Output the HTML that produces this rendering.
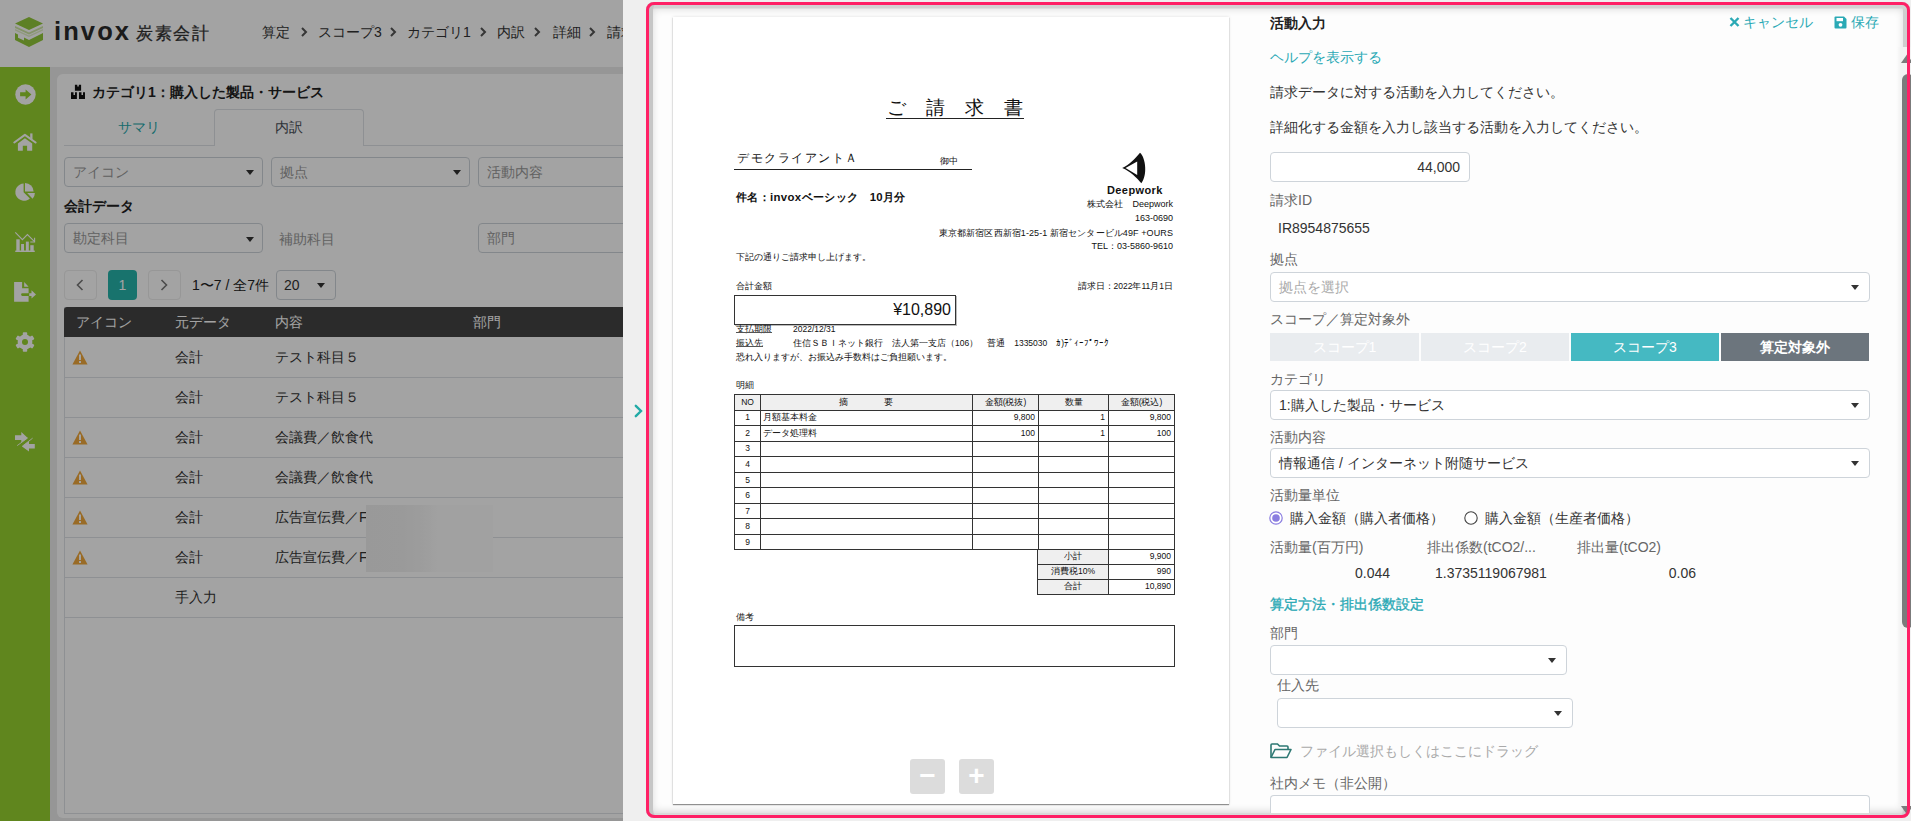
<!DOCTYPE html>
<html><head><meta charset="utf-8">
<style>
*{box-sizing:border-box;margin:0;padding:0}
html,body{width:1911px;height:821px;overflow:hidden;background:#efefef;font-family:"Liberation Sans",sans-serif;color:#333}
.a{position:absolute;white-space:nowrap}
#left{position:absolute;left:0;top:0;width:623px;height:821px;overflow:hidden;background:#ebebeb}
#hdr{position:absolute;left:0;top:0;width:623px;height:67px;background:#fff}
#side{position:absolute;left:0;top:67px;width:50px;height:754px;background:#97d22f}
#card{position:absolute;left:57px;top:74px;width:620px;height:744px;background:#fff;border-radius:6px}
.sel{position:absolute;height:30px;border:1px solid #ced4da;border-radius:4px;background:#fff;font-size:14px;color:#999;padding-left:8px;line-height:29px}
.caret{position:absolute;width:0;height:0;border-left:4.5px solid transparent;border-right:4.5px solid transparent;border-top:5px solid #333}
.row{position:absolute;left:64px;width:600px;height:40px;border-bottom:1px solid #dee2e6;font-size:14px;color:#333}
.row span{line-height:38px!important}
.row span{position:absolute;top:0;line-height:40px}
#ovl{position:absolute;left:0;top:0;width:623px;height:821px;background:rgba(0,0,0,0.36)}
#right{position:absolute;left:623px;top:0;width:1288px;height:821px;background:#efefef}
.bc{top:22px;font-size:14px;line-height:20px;color:#333}
.th{top:312px;font-size:14px;line-height:20px;color:#fff}
#panel{position:absolute;left:646px;top:2px;width:1264px;height:816px;border-radius:8px;background:#fdfdfd;box-shadow:inset 7px 0 0 0 #c6c6c6,inset 0 6.5px 0 0 #d3d3d3,inset -7px 0 0 0 #cfcfcf,inset 0 -5px 0 0 #dadada,inset 0 0 9px 6px rgba(0,0,0,.17)}
#page{position:absolute;left:673px;top:17px;width:556px;height:787px;background:#fff;box-shadow:0 1px 1px rgba(0,0,0,.4),0 0 3px rgba(0,0,0,.13)}
#pink{position:absolute;left:646px;top:2px;width:1264px;height:816px;border:3.4px solid #ff2066;border-radius:8px}
.d13{font-size:12px;line-height:18px;color:#111}
.d8{font-size:8.5px;line-height:11px;color:#111}
.dr{right:738px;font-size:8.5px;line-height:11px;color:#111;text-align:right}
#it,#st{border-collapse:collapse;font-size:8.5px;color:#111}
#it td,#st td{border:1px solid #333;height:15.55px;padding:0 2px;text-align:center;line-height:11px}
#it tr.hd td{background:#efefef}
#it td.l{text-align:left}
#it td.r,#st td.r{text-align:right;padding-right:3px}
#st td.g{background:#efefef}
#st td{height:14.9px!important}
.zb{top:759px;width:35px;height:35px;background:#dcdcdc;border-radius:3px;color:#fff;font-size:28px;line-height:34px;text-align:center;font-weight:bold}
.tl{font-size:14px;line-height:20px;color:#2aa9b5}
.ft{font-size:14px;line-height:20px;color:#333}
.lb{font-size:14px;line-height:20px;color:#666}
.inp{border:1px solid #ced4da;border-radius:4px;background:#fff;font-size:14px;line-height:28px}
.sb{top:333px;height:28px;font-size:14px;line-height:28px;text-align:center}
</style></head><body>
<div id="left">
  <div id="hdr">
    <svg class="a" style="left:13px;top:16px" width="32" height="32" viewBox="0 0 32 32">
      <path d="M16 1 L30 7.5 L16 14 L2 7.5 Z" fill="#92c83a"/>
      <path d="M2 10 L16 16.5 L30 10 L30 12 L16 18.5 L2 12 Z" fill="#c3e08f" opacity="0.8"/>
      <path d="M2 13 L16 19.5 L30 13 L30 14.5 L16 21 L2 14.5 Z" fill="#d9ecb7" opacity="0.8"/>
      <path d="M2 17 L2 24 L16 31 L30 24 L30 17 L16 24 L11 21.5 L11 24.5 L5 21.7 L5 18.5 Z" fill="#92c83a"/>
    </svg>
    <div class="a" style="left:54px;top:15px;font-size:25.5px;line-height:32px;font-weight:bold;color:#2b2b2b;letter-spacing:2.1px">invox</div>
    <div class="a" style="left:136px;top:23px;font-size:17px;line-height:22px;color:#333;letter-spacing:1.6px;-webkit-text-stroke:0.3px #333">炭素会計</div>
    <div class="a bc" style="left:262px">算定</div>
    <div class="a bc" style="left:318px">スコープ3</div>
    <div class="a bc" style="left:407px">カテゴリ1</div>
    <div class="a bc" style="left:497px">内訳</div>
    <div class="a bc" style="left:553px">詳細</div>
    <div class="a bc" style="left:607px">請求</div>
    <svg class="a" style="left:300px;top:27px" width="8" height="10" viewBox="0 0 8 10"><path d="M2 1 L6 5 L2 9" stroke="#555" stroke-width="2" fill="none"/></svg>
    <svg class="a" style="left:389px;top:27px" width="8" height="10" viewBox="0 0 8 10"><path d="M2 1 L6 5 L2 9" stroke="#555" stroke-width="2" fill="none"/></svg>
    <svg class="a" style="left:479px;top:27px" width="8" height="10" viewBox="0 0 8 10"><path d="M2 1 L6 5 L2 9" stroke="#555" stroke-width="2" fill="none"/></svg>
    <svg class="a" style="left:533px;top:27px" width="8" height="10" viewBox="0 0 8 10"><path d="M2 1 L6 5 L2 9" stroke="#555" stroke-width="2" fill="none"/></svg>
    <svg class="a" style="left:588px;top:27px" width="8" height="10" viewBox="0 0 8 10"><path d="M2 1 L6 5 L2 9" stroke="#555" stroke-width="2" fill="none"/></svg>
  </div>
  <div id="side"></div>
  <svg class="a" style="left:0;top:0" width="50" height="460" viewBox="0 0 50 460">
    <g fill="#fff">
      <circle cx="25.5" cy="94.5" r="10.2"/>
      <path d="M14.3 142.5 L24.9 134.9 L35.6 142.5" stroke="#fff" stroke-width="2.1" fill="none" stroke-linecap="round" stroke-linejoin="round"/>
      <rect x="30.2" y="133.4" width="2.3" height="6"/>
      <path d="M17.9 143.4 L24.9 138.2 L32.2 143.4 V150.7 H27.1 V145.7 H22.8 V150.7 H17.9 Z"/>
      <path d="M23.6 183.6 A8.6 8.6 0 1 0 29.9 198.4 L23.6 192.3 Z"/>
      <path d="M25 182.9 A8.6 8.6 0 0 1 33.6 191.5 H25 Z"/>
      <path d="M27.2 193 H34.9 A8.6 8.6 0 0 1 32.6 198.7 Z"/>
      <rect x="15.1" y="250.6" width="19.8" height="1.3" rx="0.6"/>
      <rect x="16.3" y="239.3" width="3.4" height="11.6"/>
      <rect x="21.1" y="244" width="2.9" height="6.9"/>
      <rect x="25.9" y="241.6" width="2.9" height="9.3"/>
      <rect x="30.3" y="245.2" width="3.4" height="5.7"/>
      <path d="M15.3 232.4 L22.4 239.6 L27.4 234.5 L34.3 241.4" stroke="#fff" stroke-width="1.1" fill="none"/>
      <path d="M34.6 237.8 V242 H30.3" stroke="#fff" stroke-width="1.1" fill="none"/>
      <path d="M14.1 282.1 H22.1 V288.2 H28.6 V293.2 H22.3 Q21.1 293.2 21.1 294.5 Q21.1 295.9 22.3 295.9 H28.6 V301.7 H14.1 Z"/>
      <path d="M24.2 282.1 L28.6 286.7 H24.2 Z"/>
      <path d="M29.2 293.2 H31.5 V290.3 L36 294.5 L31.5 298.6 V295.9 H29.2 Z"/>
      <path d="M15 435.3 H21.3 V432.1 L27.8 437.9 L21.3 442.6 V439.9 H15 Z"/>
      <path d="M34.8 444 H29 V441 L22 446.4 L29 451.5 V448.5 H34.8 Z"/>
      <path d="M27.6 438 L17.2 445.6 M22.2 446.3 L32.6 438.2" stroke="#fff" stroke-width="0.9"/>
    </g>
        <path d="M20.1 92.3 H25.6 V89.4 L31.4 94.5 L25.6 99.6 V96.3 H20.1 Z" fill="#97d22f"/>
    <g transform="translate(25 342)">
      <g fill="#fff">
        <circle r="7.4"/>
        <rect x="-2.2" y="-9.7" width="4.4" height="19.4" rx="0.8"/>
        <rect x="-2.2" y="-9.7" width="4.4" height="19.4" rx="0.8" transform="rotate(60)"/>
        <rect x="-2.2" y="-9.7" width="4.4" height="19.4" rx="0.8" transform="rotate(-60)"/>
      </g>
      <circle r="3" fill="#97d22f"/>
    </g>
  </svg>
  <div id="card">
  </div>
  <!-- card contents (absolute wrt page) -->
  <svg class="a" style="left:70px;top:84px" width="16" height="16" viewBox="0 0 16 16"><path d="M4.9 0.8 H7.3 V2.5 H8.8 V0.8 H11.1 V6.8 H4.9 Z M1 8.3 H3.5 V11 H5 V8.3 H6.9 V14.9 H1 Z M9 8.3 H11.5 V11 H13 V8.3 H15 V14.9 H9 Z" fill="#111"/></svg>
  <div class="a" style="left:92px;top:82px;font-size:14px;line-height:20px;font-weight:bold;color:#222">カテゴリ1：購入した製品・サービス</div>
  <div class="a" style="left:64px;top:145px;width:580px;height:1px;background:#dee2e6"></div>
  <div class="a" style="left:214px;top:109px;width:150px;height:37px;border:1px solid #dee2e6;border-bottom:none;border-radius:4px 4px 0 0;background:#fff"></div>
  <div class="a" style="left:214px;top:117px;width:150px;text-align:center;font-size:14px;line-height:20px;color:#495057">内訳</div>
  <div class="a" style="left:64px;top:117px;width:150px;text-align:center;font-size:14px;line-height:20px;color:#27a9ab">サマリ</div>

  <div class="sel" style="left:64px;top:157px;width:199px">アイコン</div><div class="caret" style="left:246px;top:170px"></div>
  <div class="sel" style="left:271px;top:157px;width:199px">拠点</div><div class="caret" style="left:453px;top:170px"></div>
  <div class="sel" style="left:478px;top:157px;width:199px">活動内容</div>
  <div class="a" style="left:64px;top:196px;font-size:14px;line-height:20px;font-weight:bold;color:#222">会計データ</div>
  <div class="sel" style="left:64px;top:223px;width:199px">勘定科目</div><div class="caret" style="left:246px;top:237px"></div>
  <div class="a" style="left:279px;top:229px;font-size:14px;line-height:20px;color:#999">補助科目</div>
  <div class="sel" style="left:478px;top:223px;width:199px">部門</div>

  <div class="a" style="left:64px;top:270px;width:33px;height:30px;border:1px solid #ececec;border-radius:4px;background:#fff"></div>
  <svg class="a" style="left:76px;top:279px" width="8" height="12" viewBox="0 0 8 12"><path d="M6.5 1 L1.5 6 L6.5 11" stroke="#777" stroke-width="1.6" fill="none"/></svg>
  <div class="a" style="left:108px;top:270px;width:29px;height:30px;border-radius:4px;background:#27b5ab;color:#fff;font-size:14px;line-height:30px;text-align:center">1</div>
  <div class="a" style="left:148px;top:270px;width:33px;height:30px;border:1px solid #ececec;border-radius:4px;background:#fff"></div>
  <svg class="a" style="left:160px;top:279px" width="8" height="12" viewBox="0 0 8 12"><path d="M1.5 1 L6.5 6 L1.5 11" stroke="#777" stroke-width="1.6" fill="none"/></svg>
  <div class="a" style="left:192px;top:275px;font-size:14px;line-height:20px;color:#222">1〜7 / 全7件</div>
  <div class="a" style="left:276px;top:270px;width:60px;height:30px;border:1px solid #ced4da;border-radius:4px;background:#fff;font-size:14px;line-height:28px;padding-left:7px;color:#333">20</div><div class="caret" style="left:317px;top:283px"></div>

  <div class="a" style="left:64px;top:307px;width:600px;height:507px;border-left:1px solid #dee2e6;border-bottom:1px solid #dee2e6"></div>
  <div class="a" style="left:64px;top:307px;width:600px;height:30px;background:#444;border-radius:3px 3px 0 0"></div>
  <div class="a th" style="left:76px">アイコン</div>
  <div class="a th" style="left:175px">元データ</div>
  <div class="a th" style="left:275px">内容</div>
  <div class="a th" style="left:473px">部門</div>

  <div class="row" style="top:338px"><span style="left:111px">会計</span><span style="left:211px">テスト科目５</span></div>
  <div class="row" style="top:378px"><span style="left:111px">会計</span><span style="left:211px">テスト科目５</span></div>
  <div class="row" style="top:418px"><span style="left:111px">会計</span><span style="left:211px">会議費／飲食代</span></div>
  <div class="row" style="top:458px"><span style="left:111px">会計</span><span style="left:211px">会議費／飲食代</span></div>
  <div class="row" style="top:498px"><span style="left:111px">会計</span><span style="left:211px">広告宣伝費／F</span></div>
  <div class="row" style="top:538px"><span style="left:111px">会計</span><span style="left:211px">広告宣伝費／F</span></div>
  <div class="row" style="top:578px"><span style="left:111px">手入力</span></div>
  <svg class="a warn" style="left:72px;top:350px" width="16" height="15" viewBox="0 0 16 15"><path d="M8 0.5 L15.6 14.5 H0.4 Z" fill="#f0a83c"/><rect x="7" y="4.5" width="2" height="5.5" fill="#fff"/><rect x="7" y="11" width="2" height="2" fill="#fff"/></svg>
  <svg class="a warn" style="left:72px;top:430px" width="16" height="15" viewBox="0 0 16 15"><path d="M8 0.5 L15.6 14.5 H0.4 Z" fill="#f0a83c"/><rect x="7" y="4.5" width="2" height="5.5" fill="#fff"/><rect x="7" y="11" width="2" height="2" fill="#fff"/></svg>
  <svg class="a warn" style="left:72px;top:470px" width="16" height="15" viewBox="0 0 16 15"><path d="M8 0.5 L15.6 14.5 H0.4 Z" fill="#f0a83c"/><rect x="7" y="4.5" width="2" height="5.5" fill="#fff"/><rect x="7" y="11" width="2" height="2" fill="#fff"/></svg>
  <svg class="a warn" style="left:72px;top:510px" width="16" height="15" viewBox="0 0 16 15"><path d="M8 0.5 L15.6 14.5 H0.4 Z" fill="#f0a83c"/><rect x="7" y="4.5" width="2" height="5.5" fill="#fff"/><rect x="7" y="11" width="2" height="2" fill="#fff"/></svg>
  <svg class="a warn" style="left:72px;top:550px" width="16" height="15" viewBox="0 0 16 15"><path d="M8 0.5 L15.6 14.5 H0.4 Z" fill="#f0a83c"/><rect x="7" y="4.5" width="2" height="5.5" fill="#fff"/><rect x="7" y="11" width="2" height="2" fill="#fff"/></svg>
  <div class="a" style="left:366px;top:505px;width:127px;height:67px;background:linear-gradient(90deg,#f0f0f0 0%,#f1f1f1 30%,#f7f7f7 48%,#fcfcfc 56%,#fcfcfc 100%)"></div>
  <div id="ovl"></div>
</div>

<div id="right">
  <svg class="a" style="left:11px;top:404px" width="9" height="14" viewBox="0 0 9 14"><path d="M1.8 1.8 L7 7 L1.8 12.2" stroke="#22aaa6" stroke-width="2.4" stroke-linecap="round" fill="none"/></svg>
</div>
<div id="panel"></div>
<div id="page"></div>
<!-- invoice doc -->
<div id="doc">
  <div class="a" style="left:887px;top:96px;font-size:19px;line-height:24px;letter-spacing:20px;color:#111">ご請求書</div>
  <div class="a" style="left:886px;top:118px;width:138px;height:1px;background:#222"></div>
  <div class="a d13" style="left:737px;top:149px;letter-spacing:1.5px">デモクライアントＡ</div>
  <div class="a" style="left:940px;top:155.5px;font-size:9px;line-height:10px;color:#111">御中</div>
  <div class="a" style="left:734px;top:169px;width:238px;height:1px;background:#222"></div>
  <div class="a" style="left:736px;top:189px;font-size:11.4px;letter-spacing:0.35px;line-height:16px;font-weight:bold;color:#111">件名：invoxベーシック　10月分</div>
  <svg class="a" style="left:1120px;top:151px" width="28" height="34" viewBox="1120 151 28 34"><path d="M1140 152.8 C1146 158 1147.5 176 1141.3 183.2 C1137 178 1130 171 1122.2 168 C1129 165 1135 159 1140 152.8 Z M1125.5 168 L1137.2 161.5 L1137.2 175 Z" fill="#111" fill-rule="evenodd"/></svg>
  <div class="a" style="left:1107px;top:183px;font-size:11px;line-height:14px;font-weight:bold;color:#111;letter-spacing:0.4px">Deepwork</div>
  <div class="a dr" style="top:199px;font-size:9px">株式会社　Deepwork</div>
  <div class="a dr" style="top:213px;font-size:9px">163-0690</div>
  <div class="a dr" style="top:227.5px;font-size:9px;letter-spacing:0.1px">東京都新宿区西新宿1-25-1 新宿センタービル49F +OURS</div>
  <div class="a dr" style="top:241px;font-size:9px">TEL：03-5860-9610</div>
  <div class="a d8" style="left:736px;top:252px">下記の通りご請求申し上げます。</div>
  <div class="a d8" style="left:736px;top:281px">合計金額</div>
  <div class="a dr" style="top:281px">請求日：2022年11月1日</div>
  <div class="a" style="left:734px;top:295px;width:222px;height:30px;border:1px solid #333;box-shadow:1px 1px 0 #bbb"></div>
  <div class="a" style="left:734px;top:299px;width:217px;text-align:right;font-size:16px;line-height:22px;color:#111">¥10,890</div>
  <div class="a d8" style="left:736px;top:324px">支払期限</div>
  <div class="a d8" style="left:793px;top:324px">2022/12/31</div>
  <div class="a d8" style="left:736px;top:338px">振込先</div>
  <div class="a d8" style="left:793px;top:338px">住信ＳＢＩネット銀行　法人第一支店（106）　普通　1335030　ｶ)ﾃﾞｨｰﾌﾟﾜｰｸ</div>
  <div class="a d8" style="left:736px;top:352px">恐れ入りますが、お振込み手数料はご負担願います。</div>
  <div class="a" style="left:736px;top:332px;width:36px;height:1px;background:#555"></div>
  <div class="a" style="left:736px;top:346px;width:27px;height:1px;background:#555"></div>
  <div class="a d8" style="left:736px;top:380px">明細</div>
  <table id="it" class="a" style="left:734px;top:394px">
    <tr class="hd"><td style="width:26px">NO</td><td style="width:212px;letter-spacing:36px;padding-left:36px">摘要</td><td style="width:66px">金額(税抜)</td><td style="width:70px">数量</td><td style="width:66px">金額(税込)</td></tr>
    <tr><td>1</td><td class="l">月額基本料金</td><td class="r">9,800</td><td class="r">1</td><td class="r">9,800</td></tr>
    <tr><td>2</td><td class="l">データ処理料</td><td class="r">100</td><td class="r">1</td><td class="r">100</td></tr>
    <tr><td>3</td><td></td><td></td><td></td><td></td></tr>
    <tr><td>4</td><td></td><td></td><td></td><td></td></tr>
    <tr><td>5</td><td></td><td></td><td></td><td></td></tr>
    <tr><td>6</td><td></td><td></td><td></td><td></td></tr>
    <tr><td>7</td><td></td><td></td><td></td><td></td></tr>
    <tr><td>8</td><td></td><td></td><td></td><td></td></tr>
    <tr><td>9</td><td></td><td></td><td></td><td></td></tr>
  </table>
  <table id="st" class="a" style="left:1037px;top:549px">
    <tr><td class="g" style="width:71px">小計</td><td class="r" style="width:66px">9,900</td></tr>
    <tr><td class="g">消費税10%</td><td class="r">990</td></tr>
    <tr><td class="g">合計</td><td class="r">10,890</td></tr>
  </table>
  <div class="a d8" style="left:736px;top:612px">備考</div>
  <div class="a" style="left:734px;top:625px;width:441px;height:42px;border:1px solid #333"></div>
  <div class="a zb" style="left:910px">−</div>
  <div class="a zb" style="left:959px">+</div>
</div>

<!-- form -->
<div class="a" style="left:1270px;top:13px;font-size:14px;line-height:20px;font-weight:bold;color:#222">活動入力</div>
<svg class="a" style="left:1729px;top:16px" width="11" height="12" viewBox="0 0 11 12"><path d="M1.5 2 L9.5 10 M9.5 2 L1.5 10" stroke="#2aa9b5" stroke-width="2.4"/></svg>
<div class="a tl" style="left:1743px;top:12px">キャンセル</div>
<svg class="a" style="left:1834px;top:16px" width="13" height="13" viewBox="0 0 13 13"><path d="M0.5 1.5 Q0.5 0.5 1.5 0.5 H10 L12.5 3 V11.5 Q12.5 12.5 11.5 12.5 H1.5 Q0.5 12.5 0.5 11.5 Z" fill="#2aa9b5"/><rect x="2.5" y="2" width="6.5" height="3.2" fill="#fff"/><circle cx="6.5" cy="8.8" r="1.9" fill="#fff"/></svg>
<div class="a tl" style="left:1851px;top:12px">保存</div>
<div class="a tl" style="left:1270px;top:47px">ヘルプを表示する</div>
<div class="a ft" style="left:1270px;top:82px">請求データに対する活動を入力してください。</div>
<div class="a ft" style="left:1270px;top:117px">詳細化する金額を入力し該当する活動を入力してください。</div>
<div class="a inp" style="left:1270px;top:152px;width:200px;height:30px;text-align:right;padding-right:9px;color:#333">44,000</div>
<div class="a lb" style="left:1270px;top:190px">請求ID</div>
<div class="a ft" style="left:1278px;top:218px">IR8954875655</div>
<div class="a lb" style="left:1270px;top:249px">拠点</div>
<div class="a inp" style="left:1270px;top:272px;width:600px;height:30px;padding-left:8px;color:#aaa">拠点を選択</div><div class="caret" style="left:1851px;top:285px"></div>
<div class="a lb" style="left:1270px;top:309px">スコープ／算定対象外</div>
<div class="a sb" style="left:1270px;width:149px;background:#e9ecef;color:#fff">スコープ1</div>
<div class="a sb" style="left:1421px;width:148px;background:#e9ecef;color:#fff">スコープ2</div>
<div class="a sb" style="left:1571px;width:148px;background:#45b9c2;color:#fff">スコープ3</div>
<div class="a sb" style="left:1721px;width:148px;background:#6c757d;color:#fff;font-weight:bold">算定対象外</div>
<div class="a lb" style="left:1270px;top:369px">カテゴリ</div>
<div class="a inp" style="left:1270px;top:390px;width:600px;height:30px;padding-left:8px;color:#333">1:購入した製品・サービス</div><div class="caret" style="left:1851px;top:403px"></div>
<div class="a lb" style="left:1270px;top:427px">活動内容</div>
<div class="a inp" style="left:1270px;top:448px;width:600px;height:30px;padding-left:8px;color:#333">情報通信 / インターネット附随サービス</div><div class="caret" style="left:1851px;top:461px"></div>
<div class="a lb" style="left:1270px;top:485px">活動量単位</div>
<svg class="a" style="left:1269px;top:511px" width="14" height="14" viewBox="0 0 14 14"><circle cx="7" cy="7" r="6.2" fill="#fff" stroke="#8a7de0" stroke-width="1.2"/><circle cx="7" cy="7" r="3.8" fill="#8a7de0"/></svg>
<div class="a ft" style="left:1290px;top:508px">購入金額（購入者価格）</div>
<svg class="a" style="left:1464px;top:511px" width="14" height="14" viewBox="0 0 14 14"><circle cx="7" cy="7" r="6.2" fill="#fff" stroke="#444" stroke-width="1.1"/></svg>
<div class="a ft" style="left:1485px;top:508px">購入金額（生産者価格）</div>
<div class="a lb" style="left:1270px;top:537px">活動量(百万円)</div>
<div class="a lb" style="left:1427px;top:537px">排出係数(tCO2/...</div>
<div class="a lb" style="left:1577px;top:537px">排出量(tCO2)</div>
<div class="a ft" style="left:1290px;top:563px;width:100px;text-align:right">0.044</div>
<div class="a ft" style="left:1435px;top:563px;width:112px;overflow:hidden">1.37351190679813</div>
<div class="a ft" style="left:1596px;top:563px;width:100px;text-align:right">0.06</div>
<div class="a tl" style="left:1270px;top:594px;-webkit-text-stroke:0.35px #2aa9b5">算定方法・排出係数設定</div>
<div class="a lb" style="left:1270px;top:623px">部門</div>
<div class="a inp" style="left:1270px;top:645px;width:297px;height:30px"></div><div class="caret" style="left:1548px;top:658px"></div>
<div class="a lb" style="left:1277px;top:675px">仕入先</div>
<div class="a inp" style="left:1277px;top:698px;width:296px;height:30px"></div><div class="caret" style="left:1554px;top:711px"></div>
<svg class="a" style="left:1270px;top:743px" width="22" height="16" viewBox="0 0 22 16"><path d="M1 14.5 V2 Q1 1 2 1 H7.5 L9.5 3 H17 Q18 3 18 4 V6" stroke="#2d7873" stroke-width="1.6" fill="none"/><path d="M1 14.5 L5 6.5 H21 L17 14.5 Z" stroke="#2d7873" stroke-width="1.6" fill="none" stroke-linejoin="round"/></svg>
<div class="a" style="left:1300px;top:741px;font-size:14px;line-height:20px;color:#aaa">ファイル選択もしくはここにドラッグ</div>
<div class="a lb" style="left:1270px;top:773px">社内メモ（非公開）</div>
<div class="a inp" style="left:1270px;top:795px;width:600px;height:30px;border-bottom:none;border-radius:4px 4px 0 0;clip-path:inset(0 0 12px 0)"></div>

<!-- scrollbar -->
<div class="a" style="left:1897px;top:47px;width:14px;height:760px;background:linear-gradient(90deg,rgba(240,240,240,0),#f2f2f2 40%)"></div>
<svg class="a" style="left:1901px;top:54px" width="12" height="10" viewBox="0 0 12 10"><path d="M6 0.5 L12 9 H0 Z" fill="#7b7b7b"/></svg>
<div class="a" style="left:1902px;top:74px;width:12px;height:554px;background:#7b7b7b;border-radius:6px"></div>
<svg class="a" style="left:1901px;top:806px" width="12" height="10" viewBox="0 0 12 10"><path d="M6 8.5 L12 0 H0 Z" fill="#7b7b7b"/></svg>
<!-- pink highlight -->
<div id="pink"></div>

</body></html>
